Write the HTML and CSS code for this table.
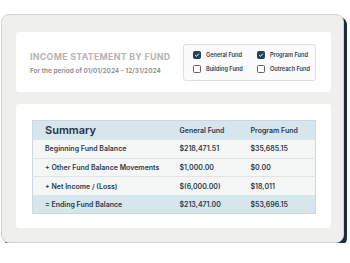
FILE: index.html
```html
<!DOCTYPE html>
<html>
<head>
<meta charset="utf-8">
<link rel="stylesheet" href="styles.css">
</head>
<body>
<div class="frame">
  <div class="card top">
    <div class="heading">
      <div class="title">INCOME STATEMENT BY FUND</div>
      <div class="period">For the period of 01/01/2024 - 12/31/2024</div>
    </div>
    <div class="funds">
      <label class="fund"><span class="box checked"><svg viewBox="0 0 8 8" width="8" height="8"><path d="M1.6 4.2 L3.3 5.8 L6.5 2.3" fill="none" stroke="#fff" stroke-width="1.3"/></svg></span>General Fund</label>
      <label class="fund"><span class="box checked"><svg viewBox="0 0 8 8" width="8" height="8"><path d="M1.6 4.2 L3.3 5.8 L6.5 2.3" fill="none" stroke="#fff" stroke-width="1.3"/></svg></span>Program Fund</label>
      <label class="fund"><span class="box"></span>Building Fund</label>
      <label class="fund"><span class="box"></span>Outreach Fund</label>
    </div>
  </div>
  <div class="card bottom">
    <table class="summary">
      <thead>
        <tr class="head"><th class="c1 big">Summary</th><th class="c2">General Fund</th><th class="c3">Program Fund</th></tr>
      </thead>
      <tbody>
        <tr><td class="c1">Beginning Fund Balance</td><td class="c2">$218,471.51</td><td class="c3">$35,685.15</td></tr>
        <tr><td class="c1">+ Other Fund Balance Movements</td><td class="c2">$1,000.00</td><td class="c3">$0.00</td></tr>
        <tr><td class="c1">+ Net Income / (Loss)</td><td class="c2">$(6,000.00)</td><td class="c3">$18,011</td></tr>
        <tr class="total"><td class="c1">= Ending Fund Balance</td><td class="c2">$213,471.00</td><td class="c3">$53,696.15</td></tr>
      </tbody>
    </table>
  </div>
</div>
</body>
</html>
```
FILE: styles.css
```css
* { box-sizing: border-box; }
html, body { margin: 0; padding: 0; background: #ffffff; }
body { font-family: Inter, "Noto Sans", sans-serif; color: #2b3a4b; }

.frame {
  margin: 14px 0 0 1px;
  width: 343px;
  height: 229px;
  background: #efefed;
  border: 1px solid #d3d3d1;
  border-radius: 8px;
  box-shadow: 3px 3px 0 #1b2d42;
  padding: 17px 12px 14px 14px;
  display: flex;
  flex-direction: column;
  gap: 12px;
}

.card {
  background: #ffffff;
  border-radius: 3px;
  width: 315px;
}

.top {
  height: 60px;
  display: flex;
  align-items: center;
  justify-content: space-between;
  padding: 0 15px 0 14px;
}

.heading { display: flex; flex-direction: column; gap: 5px; padding-top: 1px; }
.title {
  font-size: 8.8px;
  font-weight: 700;
  letter-spacing: 0.3px;
  color: #b4b4b4;
  line-height: 11px;
  white-space: nowrap;
}
.period {
  font-size: 6.5px;
  font-weight: 600;
  color: #8a8a8a;
  line-height: 8px;
  white-space: nowrap;
}

.funds {
  width: 133px;
  height: 37px;
  border: 1px solid #dedede;
  border-radius: 3px;
  background: #fbfbfb;
  display: grid;
  grid-template-columns: 64px 60px;
  grid-template-rows: 12px 12px;
  row-gap: 2px;
  align-content: center;
  padding-left: 9px;
}
.fund {
  display: flex;
  align-items: center;
  gap: 5px;
  font-size: 5.6px;
  font-weight: 600;
  color: #2d3b4c;
  white-space: nowrap;
}
.box {
  width: 8px;
  height: 8px;
  border: 1px solid #5a5f66;
  border-radius: 1.5px;
  background: #fff;
  display: flex;
  align-items: center;
  justify-content: center;
  flex: none;
}
.box.checked { background: #1d4562; border-color: #1d4562; }
.box svg { display: block; }

.bottom {
  height: 124px;
  padding: 16px 16px 0 16px;
}

.summary {
  width: 283px;
  border-collapse: collapse;
  table-layout: fixed;
  border: 1px solid #c9d9e3;
}
.summary th, .summary td {
  text-align: left;
  padding: 0 0 0 12px;
  white-space: nowrap;
  font-size: 7px;
  font-weight: 600;
  color: #2b3a4b;
}
.c1 { width: 136px; }
.c2 { width: 70px; }
.c3 { width: 77px; }
.summary th.c2, .summary td.c2 { padding-left: 11px; }
.summary th.c3, .summary td.c3 { padding-left: 12px; }

.head { background: #d7e5ed; height: 19px; }
.head th.big { font-size: 11px; font-weight: 600; color: #243447; }
.summary tbody tr { height: 18.5px; background: #f5f6f6; border-top: 1px solid #dfe4e7; }
.summary tbody tr.total { background: #d7e5ed; border-top: none; }
```
